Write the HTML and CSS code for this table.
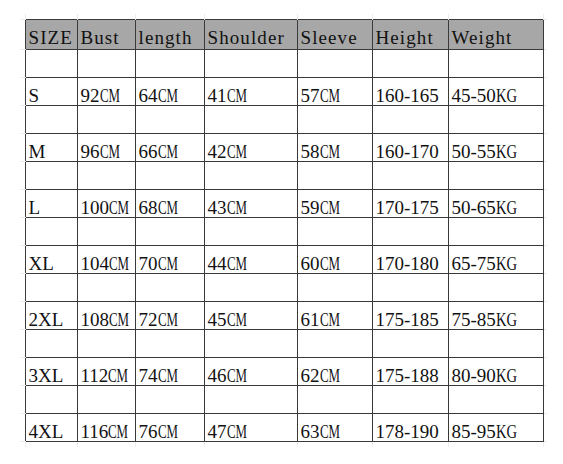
FILE: index.html
```html
<!DOCTYPE html>
<html>
<head>
<meta charset="utf-8">
<link rel="stylesheet" href="styles.css">
</head>
<body>
<table class="sheet">
  <colgroup>
    <col class="c-edge-l">
    <col class="c1"><col class="c2"><col class="c3"><col class="c4"><col class="c5"><col class="c6"><col class="c7">
    <col class="c-edge-r">
  </colgroup>
  <tr class="edge-top">
    <td class="eL"></td><td class="tk"></td><td class="tk"></td><td class="tk"></td><td class="tk"></td><td class="tk"></td><td class="tk"></td><td class="tk"></td><td class="eR"></td>
  </tr>
  <tr class="head">
    <td class="eL"></td><th>SIZE</th><th>Bust</th><th>length</th><th>Shoulder</th><th>Sleeve</th><th>Height</th><th>Weight</th><td class="eR"></td>
  </tr>
  <tr class="blank"><td class="eL"></td><td></td><td></td><td></td><td></td><td></td><td></td><td></td><td class="eR"></td></tr>
  <tr class="data"><td class="eL"></td><td>S</td><td>92<span class="cm">CM</span></td><td>64<span class="cm">CM</span></td><td>41<span class="cm">CM</span></td><td>57<span class="cm">CM</span></td><td>160-165</td><td>45-50<span class="kg">KG</span></td><td class="eR"></td></tr>
  <tr class="blank"><td class="eL"></td><td></td><td></td><td></td><td></td><td></td><td></td><td></td><td class="eR"></td></tr>
  <tr class="data"><td class="eL"></td><td>M</td><td>96<span class="cm">CM</span></td><td>66<span class="cm">CM</span></td><td>42<span class="cm">CM</span></td><td>58<span class="cm">CM</span></td><td>160-170</td><td>50-55<span class="kg">KG</span></td><td class="eR"></td></tr>
  <tr class="blank"><td class="eL"></td><td></td><td></td><td></td><td></td><td></td><td></td><td></td><td class="eR"></td></tr>
  <tr class="data"><td class="eL"></td><td>L</td><td>100<span class="cm">CM</span></td><td>68<span class="cm">CM</span></td><td>43<span class="cm">CM</span></td><td>59<span class="cm">CM</span></td><td>170-175</td><td>50-65<span class="kg">KG</span></td><td class="eR"></td></tr>
  <tr class="blank"><td class="eL"></td><td></td><td></td><td></td><td></td><td></td><td></td><td></td><td class="eR"></td></tr>
  <tr class="data"><td class="eL"></td><td>XL</td><td>104<span class="cm">CM</span></td><td>70<span class="cm">CM</span></td><td>44<span class="cm">CM</span></td><td>60<span class="cm">CM</span></td><td>170-180</td><td>65-75<span class="kg">KG</span></td><td class="eR"></td></tr>
  <tr class="blank"><td class="eL"></td><td></td><td></td><td></td><td></td><td></td><td></td><td></td><td class="eR"></td></tr>
  <tr class="data"><td class="eL"></td><td>2XL</td><td>108<span class="cm">CM</span></td><td>72<span class="cm">CM</span></td><td>45<span class="cm">CM</span></td><td>61<span class="cm">CM</span></td><td>175-185</td><td>75-85<span class="kg">KG</span></td><td class="eR"></td></tr>
  <tr class="blank"><td class="eL"></td><td></td><td></td><td></td><td></td><td></td><td></td><td></td><td class="eR"></td></tr>
  <tr class="data"><td class="eL"></td><td>3XL</td><td>112<span class="cm">CM</span></td><td>74<span class="cm">CM</span></td><td>46<span class="cm">CM</span></td><td>62<span class="cm">CM</span></td><td>175-188</td><td>80-90<span class="kg">KG</span></td><td class="eR"></td></tr>
  <tr class="blank"><td class="eL"></td><td></td><td></td><td></td><td></td><td></td><td></td><td></td><td class="eR"></td></tr>
  <tr class="data"><td class="eL"></td><td>4XL</td><td>116<span class="cm">CM</span></td><td>76<span class="cm">CM</span></td><td>47<span class="cm">CM</span></td><td>63<span class="cm">CM</span></td><td>178-190</td><td>85-95<span class="kg">KG</span></td><td class="eR"></td></tr>
  <tr class="edge-bot">
    <td class="eL"></td><td class="tk"></td><td class="tk"></td><td class="tk"></td><td class="tk"></td><td class="tk"></td><td class="tk"></td><td class="tk"></td><td class="eR"></td>
  </tr>
</table>
</body>
</html>
```
FILE: styles.css
```css
html, body {
  margin: 0;
  padding: 0;
  background: #ffffff;
}

body {
  padding: 14px 0 0 20px;
  font-family: "Liberation Serif", "Times New Roman", serif;
  color: #111;
}

.sheet {
  border-collapse: collapse;
  table-layout: fixed;
  width: 527px;
}

.c-edge-l { width: 5px; }
.c1 { width: 52px; }
.c2 { width: 58px; }
.c3 { width: 69px; }
.c4 { width: 93px; }
.c5 { width: 75px; }
.c6 { width: 76px; }
.c7 { width: 95px; }
.c-edge-r { width: 4px; }

.sheet td,
.sheet th {
  padding: 0 2px 0 3px;
  border: 1px solid #3a3a3a;
  height: 27px;
  vertical-align: bottom;
  text-align: left;
  white-space: nowrap;
  font-weight: normal;
}

.head th {
  background: #a7a7a7;
  font-size: 19px;
  line-height: 19px;
  letter-spacing: 1.1px;
  padding-bottom: 2px;
  color: #111;
}

.data td {
  font-size: 19px;
  line-height: 18px;
  letter-spacing: 0;
  padding-left: 3px;
}

.cm,
.kg {
  display: inline-block;
  transform-origin: left bottom;
  white-space: nowrap;
}

.cm {
  width: 20px;
  transform: scaleX(0.68);
}

.kg {
  width: 21px;
  transform: scaleX(0.77);
}

.sheet td.eL,
.sheet td.eR {
  border-top: 1px solid #ececec;
  border-bottom: 1px solid #ececec;
  border-left: none;
  border-right: none;
  padding: 0;
}

.edge-top td,
.edge-bot td {
  height: 5px;
  padding: 0;
  border-top: none;
  border-bottom: none;
  border-left: 1px solid #ececec;
  border-right: 1px solid #ececec;
}

.edge-top td.eL, .edge-top td.eR,
.edge-bot td.eL, .edge-bot td.eR {
  border: none;
}
```
